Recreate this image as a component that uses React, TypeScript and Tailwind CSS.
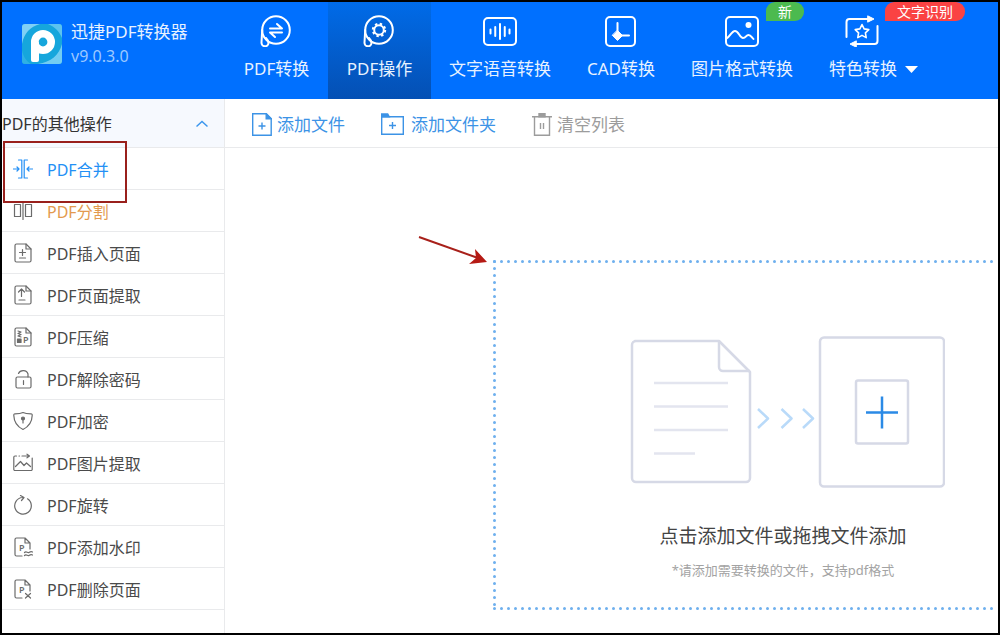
import type { ReactNode } from 'react'
import clsx from 'clsx'

type NavTab = {
  label: string
  icon: ReactNode
  active?: boolean
  dropdown?: boolean
  badge?: { text: string; className: string }
}

type SidebarItem = {
  label: string
  icon: ReactNode
  className?: string
}

function NavIcon({ children }: { children: ReactNode }) {
  return (
    <svg
      viewBox="0 0 36 32"
      className="h-8 w-9"
      fill="none"
      stroke="currentColor"
      strokeWidth={2}
      strokeLinecap="round"
      strokeLinejoin="round"
      aria-hidden="true"
    >
      {children}
    </svg>
  )
}

// Disc with a small loop hanging off its lower left side
function Disc() {
  return (
    <>
      <circle cx={17} cy={15} r={13.8} />
      <path d="M3.200 15 2.500 27.500a3.500 3.500 0 0 0 7 .5c0-2-1-3.500-2.500-5" />
    </>
  )
}

function SideIcon({ children }: { children: ReactNode }) {
  return (
    <svg
      viewBox="0 0 20 20"
      className="h-5 w-5 shrink-0"
      fill="none"
      stroke="currentColor"
      strokeWidth={1.2}
      strokeLinecap="round"
      strokeLinejoin="round"
      aria-hidden="true"
    >
      {children}
    </svg>
  )
}

function Page() {
  return (
    <>
      <path d="M3.5 1H13l5 5v11.5a1.5 1.5 0 0 1-1.5 1.5h-13A1.5 1.5 0 0 1 2 17.5v-15A1.5 1.5 0 0 1 3.5 1z" />
      <path d="M13 1v5h5" />
    </>
  )
}

function SmallP({ x, y }: { x: number; y: number }) {
  return (
    <text x={x} y={y} fontSize={9} fontWeight={600} fill="currentColor" stroke="none">
      P
    </text>
  )
}

const tabs: NavTab[] = [
  {
    label: 'PDF转换',
    icon: (
      <NavIcon>
        <Disc />
        <path d="M11 13.500h12l-5-4.500M23 17.500H11l5 4.500" />
      </NavIcon>
    ),
  },
  {
    label: 'PDF操作',
    active: true,
    icon: (
      <NavIcon>
        <Disc />
        <circle cx={17} cy={15} r={4.800} />
        <circle cx={17} cy={15} r={6.200} strokeDasharray="2.4 2.470" strokeLinecap="butt" />
      </NavIcon>
    ),
  },
  {
    label: '文字语音转换',
    icon: (
      <NavIcon>
        <rect x={2} y={3} width={32} height={27} rx={4} />
        <path d="M8.5 14.500v4M13.250 12v9M18 9v15M22.750 12v9M27.500 14.500v4" />
      </NavIcon>
    ),
  },
  {
    label: 'CAD转换',
    icon: (
      <NavIcon>
        <rect x={3} y={2} width={29} height={29} rx={4} />
        <path d="M14.500 8v12.500H26" />
        <path d="m14.500 15.500 5 5-5 5-5-5z" fill="currentColor" strokeWidth={1} />
      </NavIcon>
    ),
  },
  {
    label: '图片格式转换',
    badge: { text: '新', className: 'left-[93px] bg-[#4cba4f]' },
    icon: (
      <NavIcon>
        <rect x={2} y={2} width={32} height={29} rx={4} />
        <circle cx={24.500} cy={10} r={3} fill="currentColor" stroke="none" />
        <path d="M2.500 23.500c3-1 5-7.500 8.500-7.500s5 7 8 7 3-3 5.500-3 3.500 3 5 4" />
      </NavIcon>
    ),
  },
  {
    label: '特色转换',
    dropdown: true,
    badge: { text: '文字识别', className: 'left-[74px] bg-[#fa4343]' },
    icon: (
      <NavIcon>
        <path d="M2.500 22V7a3 3 0 0 1 3-3H25M33.500 11v15a3 3 0 0 1-3 3H12" />
        <path d="m24 1 6 3-6 3zM12 26l-6 3 6 3z" fill="currentColor" strokeWidth={1} />
        <path d="m18 9.500 2.100 4.400 4.700.7-3.400 3.300.8 4.700-4.200-2.200-4.200 2.200.8-4.700-3.400-3.300 4.700-.7z" strokeWidth={1.600} />
      </NavIcon>
    ),
  },
]

const sidebarItems: SidebarItem[] = [
  {
    label: 'PDF合并',
    className: 'text-[#2490f5]',
    icon: (
      <SideIcon>
        <path d="M5.500 1h3.300v18H5.500M14.500 1h-3.300v18h3.300M.5 10H6M4 8l2 2-2 2M19.500 10H14M16 8l-2 2 2 2" />
      </SideIcon>
    ),
  },
  {
    label: 'PDF分割',
    className: 'text-[#e39a4f]',
    icon: (
      <SideIcon>
        <path d="M1.500 3.500h6v12h-6zM12.500 3.500h6v12h-6zM10 1.500v17" />
      </SideIcon>
    ),
  },
  {
    label: 'PDF插入页面',
    icon: (
      <SideIcon>
        <Page />
        <path d="M6.500 9.500h6M9.500 6.500v6M6.500 15h6" />
      </SideIcon>
    ),
  },
  {
    label: 'PDF页面提取',
    icon: (
      <SideIcon>
        <Page />
        <path d="M8.500 11.500v-7M5.500 7l3-3 3 3M6 15h6" />
      </SideIcon>
    ),
  },
  {
    label: 'PDF压缩',
    icon: (
      <SideIcon>
        <Page />
        <path d="m5 4 3 1-3 1.500 3 1-3 1.500 3 1" />
        <path d="M4.500 12h3.500v3.500H4.500z" fill="currentColor" />
        <SmallP x={10} y={16} />
      </SideIcon>
    ),
  },
  {
    label: 'PDF解除密码',
    icon: (
      <SideIcon>
        <rect x={3} y={8} width={15} height={11} rx={1.500} />
        <path d="M5.500 4.500A5 4.500 0 0 1 15 5v3M10.500 11.500v4" />
      </SideIcon>
    ),
  },
  {
    label: 'PDF加密',
    icon: (
      <SideIcon>
        <path d="M10 1.500c2 1 5 1.300 8 1.300 1 0 1.300.7 1.200 1.700C19 11 16 15.500 10 18.500 4 15.500 1 11 .8 4.500.7 3.500 1 2.800 2 2.800c3 0 6-.3 8-1.300z" />
        <path d="M10 8v4" />
        <circle cx={10} cy={7.500} r={1.500} fill="currentColor" />
      </SideIcon>
    ),
  },
  {
    label: 'PDF图片提取',
    icon: (
      <SideIcon>
        <path d="M3.500 3H2a1.200 1.200 0 0 0-1.200 1.200v12A1.200 1.200 0 0 0 2 17.500h16a1.200 1.200 0 0 0 1.200-1.300V5M6 3h.5M9 3h7M14 1.200 16.500 3 14 4.800" />
        <path d="m2.500 13.500 5-5 3.500 4 2.500-2.500 4 3.500" />
      </SideIcon>
    ),
  },
  {
    label: 'PDF旋转',
    icon: (
      <SideIcon>
        <path d="M9.500 2.500A8.300 8.300 0 1 0 14.500 3.800M7.500.5l3.500 2-2.500 3" />
      </SideIcon>
    ),
  },
  {
    label: 'PDF添加水印',
    icon: (
      <SideIcon>
        <path d="M9 19H3.500A1.500 1.500 0 0 1 2 17.500v-15A1.500 1.500 0 0 1 3.500 1H12l5 5v6M12 1v5h5" />
        <path d="M11.500 15.500c2-2 3 1 4.500 0s2-1.500 3.500-.5M11.500 18.500c2-2 3 1 4.500 0s2-1.500 3.500-.5" />
        <SmallP x={6} y={14} />
      </SideIcon>
    ),
  },
  {
    label: 'PDF删除页面',
    icon: (
      <SideIcon>
        <path d="M9 19H3.500A1.500 1.500 0 0 1 2 17.500v-15A1.500 1.500 0 0 1 3.500 1H12l5 5v6M12 1v5h5" />
        <path d="m12.500 14.500 5 4.500M17.500 14.500l-5 4.500" />
        <SmallP x={6} y={14} />
      </SideIcon>
    ),
  },
]

function Logo() {
  return (
    <svg viewBox="0 0 40 40" className="h-10 w-10 shrink-0" aria-hidden="true">
      <clipPath id="logo-clip">
        <rect width={40} height={40} rx={3} />
      </clipPath>
      <g clipPath="url(#logo-clip)">
        <rect width={40} height={40} fill="#16a6dc" />
        <path d="M0 0h18C8 3 2 9 0 20z" fill="#7fd0f5" />
        <path d="M26 0h14v14C37 7 33 3 26 0z" fill="#5cc3ef" />
        <path d="M40 20v20H16c13-2 21-9 24-20z" fill="#72cdf2" />
        <path d="M0 26c1 6 4 11 9 14H0z" fill="#2fb0e4" />
        <rect x={9} y={17} width={8} height={21} rx={2} fill="#fff" />
        <circle cx={21} cy={18} r={8.200} fill="none" stroke="#fff" strokeWidth={7.600} />
      </g>
    </svg>
  )
}

function Header() {
  return (
    <header className="flex h-[97px] shrink-0 bg-[#0070ff] text-white">
      <div className="flex w-[223px] shrink-0 items-start gap-[9px] pt-[22px] pl-5">
        <Logo />
        <div className="-mt-1">
          <h1 className="text-[17px] leading-6 text-[#e8f2ff]">迅捷PDF转换器</h1>
          <p className="text-[16px] leading-6 text-[#9cc8ff]">v9.0.3.0</p>
        </div>
      </div>
      <nav className="flex">
        {tabs.map((tab) => (
          <button
            key={tab.label}
            type="button"
            className={clsx(
              'relative flex min-w-[103px] flex-col items-center gap-2.5 px-[18px] pt-[13px] whitespace-nowrap',
              tab.active && 'bg-linear-to-b from-[#006be8] to-[#0450b4]',
            )}
          >
            <span className={clsx(tab.dropdown && 'pr-6')}>{tab.icon}</span>
            <span className="flex items-center gap-2 text-[17px] leading-6 text-[#e8f2ff]">
              {tab.label}
              {tab.dropdown ? (
                <svg viewBox="0 0 13 7" className="h-[7px] w-[13px]" aria-hidden="true">
                  <path d="M0 0h13L6.500 7z" fill="#fff" />
                </svg>
              ) : null}
            </span>
            {tab.badge ? (
              <span
                className={clsx(
                  'absolute top-0 rounded-tl-[9px] rounded-r-[9px] px-3 text-[14px] leading-[19px]',
                  tab.badge.className,
                )}
              >
                {tab.badge.text}
              </span>
            ) : null}
          </button>
        ))}
      </nav>
    </header>
  )
}

function Sidebar() {
  return (
    <aside className="w-[223px] shrink-0 border-r border-[#e9eaec]">
      <button
        type="button"
        className="flex h-[49px] w-full items-center justify-between border-b border-[#e9eaec] bg-[#f6f9fe] pt-0.5 pr-4 text-[16px] text-[#333]"
      >
        PDF的其他操作
        <svg viewBox="0 0 12 8" className="h-2 w-3" fill="none" stroke="#3c97ee" strokeWidth={1.500} aria-hidden="true">
          <path d="m.5 6.500 5.500-5 5.500 5" />
        </svg>
      </button>
      <ul className="relative">
        {sidebarItems.map((item) => (
          <li key={item.label} className="border-b border-[#e9eaec]">
            <button
              type="button"
              className="flex h-[41px] w-full items-center gap-3.5 pl-[11px] text-[16px] text-[#4a4a4a]"
            >
              <span className={item.label === 'PDF合并' ? 'text-[#2490f5]' : 'text-[#6b6b6b]'}>{item.icon}</span>
              <span className={clsx('pt-0.5', item.className)}>{item.label}</span>
            </button>
          </li>
        ))}
        <li
          aria-hidden="true"
          className="pointer-events-none absolute -top-[7px] left-px h-[62px] w-[124px] border-2 border-[#99201c]"
        />
      </ul>
    </aside>
  )
}

function Toolbar() {
  return (
    <div className="flex h-[49px] shrink-0 items-center gap-9 border-b border-[#e9eaec] pt-0.5 pl-[27px] text-[17px] whitespace-nowrap">
      <button type="button" className="flex items-center gap-[5px] text-[#3c93e6]">
        <svg viewBox="0 0 20 23" className="h-[23px] w-5" fill="none" stroke="currentColor" strokeWidth={1.400} aria-hidden="true">
          <path d="M.7.700h13.500l5 5v16.500H.7zM10 9.500v7M6.500 13h7" />
          <path d="M14.200.700v5h5z" fill="currentColor" />
        </svg>
        <span className="pt-0.5">添加文件</span>
      </button>
      <button type="button" className="flex items-center gap-[7px] text-[#3c93e6]">
        <svg viewBox="0 0 23 22" className="h-[22px] w-[23px]" fill="none" stroke="currentColor" strokeWidth={1.400} aria-hidden="true">
          <path d="M.7 3.700h21.600v17.600H.7zM11.500 9v7M8 12.500h7" />
          <path d="M.7 3.700V1h6l1.500 2.700z" fill="currentColor" />
        </svg>
        <span className="pt-0.5">添加文件夹</span>
      </button>
      <button type="button" className="flex items-center gap-[5px] text-[#9c9c9c]">
        <svg viewBox="0 0 20 23" className="h-[23px] w-5" fill="none" stroke="currentColor" strokeWidth={1.400} aria-hidden="true">
          <path d="M0 3.700h20M2.500 3.700v18.500h15V3.700M8.500 10v6M11.500 10v6" />
          <path d="M7 .7h6v3H7z" fill="currentColor" />
        </svg>
        <span className="pt-0.5">清空列表</span>
      </button>
    </div>
  )
}

function DropIllustration() {
  return (
    <svg viewBox="0 0 324 152" className="h-[152px] w-[324px]" fill="none" strokeLinejoin="round" aria-hidden="true">
      <g stroke="#d6d9e6" strokeWidth={2.500}>
        <path d="M14 5h84l31 31v106a4 4 0 0 1-4 4H15a4 4 0 0 1-4-4V9a4 4 0 0 1 4-4z" />
        <path d="M98 5v26a4 4 0 0 0 4 4h27" />
        <rect x={199} y={1.500} width={124} height={149} rx={4} />
        <rect x={235} y={44.500} width={52} height={63} rx={2} />
      </g>
      <path d="M33 47h74M33 70.500h74M33 94h74M33 117.500h41" stroke="#e3e5ef" strokeWidth={2.500} />
      <path d="m137 73 10 9.500-10 9.500M160.500 73l10 9.500-10 9.500M182 73l10 9.500-10 9.500" stroke="#b9daf9" strokeWidth={2.500} />
      <path d="M245 76.500h32M261 60.500v32" stroke="#2b8ae6" strokeWidth={2.500} />
    </svg>
  )
}

function DropZone() {
  return (
    <div className="relative mt-[112px] mb-[23px] ml-[268px]">
      <button type="button" className="flex w-full flex-col items-center pt-[76px] pb-[30px] pl-[75px]">
        <DropIllustration />
        <span className="mt-[34px] text-[19px] leading-7 whitespace-nowrap text-[#444]">点击添加文件或拖拽文件添加</span>
        <span className="mt-2.5 text-[13px] leading-5 whitespace-nowrap text-[#a3a3a3]">
          *请添加需要转换的文件，支持pdf格式
        </span>
      </button>
      <svg className="pointer-events-none absolute inset-0 h-full w-full overflow-hidden" aria-hidden="true">
        <g stroke="#6fb0ee" strokeWidth={3} strokeLinecap="round" strokeDasharray="0 7">
          <line x1={1.500} y1={1.500} x2="100%" y2={1.500} />
          <line x1={1.500} y1={1.500} x2={1.500} y2="100%" />
          <line x1={1.500} y1={348.500} x2="100%" y2={348.500} />
        </g>
      </svg>
      <svg
        viewBox="0 0 70 32"
        className="pointer-events-none absolute -top-6 -left-[75px] h-8 w-[70px]"
        aria-hidden="true"
      >
        <path d="M1 1 60 22" stroke="#a8201a" strokeWidth={2} />
        <path d="m69 26-18 2 7-6-1-9z" fill="#b51a14" />
      </svg>
    </div>
  )
}

export default function App() {
  return (
    <div className="flex min-h-screen flex-col overflow-hidden border-2 border-black bg-white font-['Noto_Sans','Noto_Sans_CJK_SC',sans-serif]">
      <Header />
      <div className="flex flex-1">
        <Sidebar />
        <main className="flex min-w-0 flex-1 flex-col">
          <Toolbar />
          <DropZone />
        </main>
      </div>
    </div>
  )
}
